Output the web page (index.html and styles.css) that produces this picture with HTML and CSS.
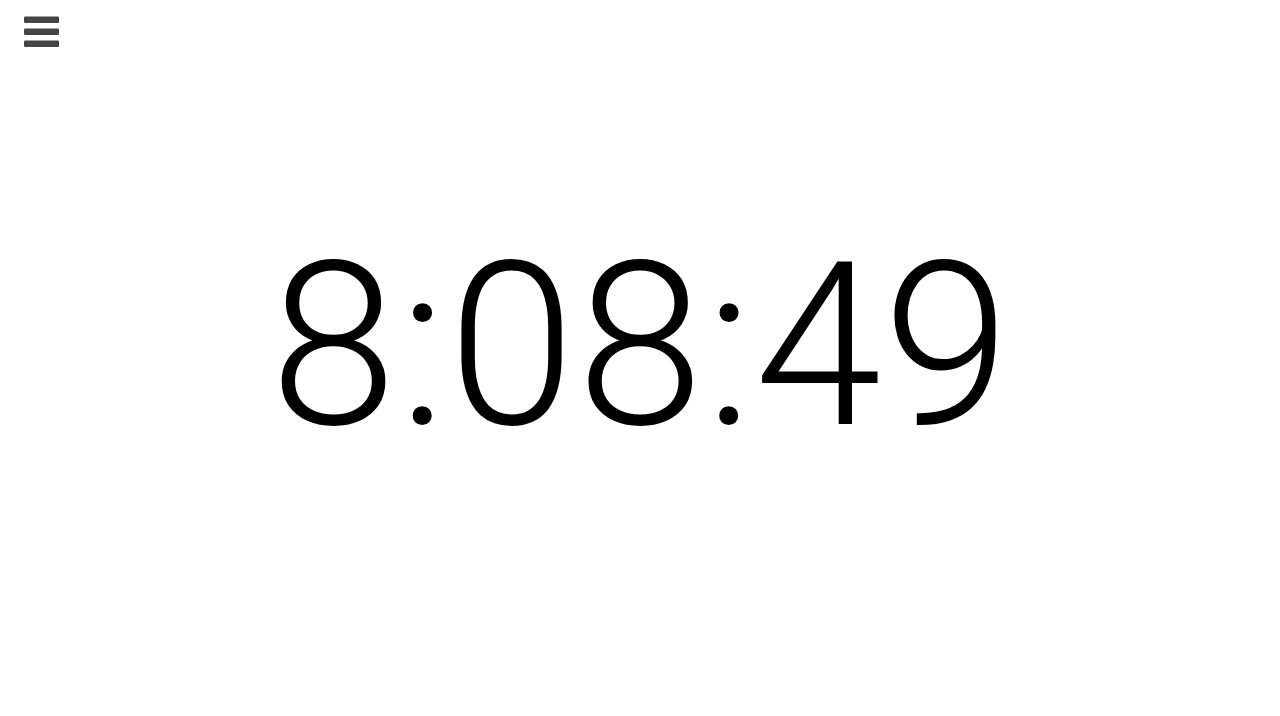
FILE: index.html
```html
<!DOCTYPE html>
<html>
<head>
<meta charset="utf-8">
<link rel="stylesheet" href="styles.css">
</head>
<body>
<div class="page">
  <header class="top">
    <button class="menu" aria-label="Menu">
      <svg width="36" height="32" viewBox="0 0 36 32">
        <rect x="0" y="0.5" width="35" height="6.5" rx="1.2" fill="#444"/>
        <rect x="0" y="12.5" width="35" height="6.5" rx="1.2" fill="#444"/>
        <rect x="0" y="24.5" width="35" height="6.5" rx="1.2" fill="#444"/>
      </svg>
    </button>
  </header>
  <main class="clock-wrap">
    <div class="clock">8:08:49</div>
  </main>
</div>
</body>
</html>
```

FILE: styles.css
```css
html, body {
  margin: 0;
  padding: 0;
  background: #fff;
  height: 100%;
}
.page {
  height: 716px;
  display: flex;
  flex-direction: column;
}
.top {
  padding: 16px 0 0 24px;
  height: 40px;
}
.menu {
  border: 0;
  background: none;
  padding: 0;
  margin: 0;
  display: block;
  line-height: 0;
}
.clock-wrap {
  flex: 1;
  display: flex;
  justify-content: center;
  align-items: flex-start;
}
.clock {
  font-family: Roboto, "Noto Sans", sans-serif;
  font-weight: 300;
  font-size: 229px;
  letter-spacing: 1.5px;
  text-indent: 1.5px;
  line-height: 1;
  color: #000;
  margin-top: 176px;
}
```
